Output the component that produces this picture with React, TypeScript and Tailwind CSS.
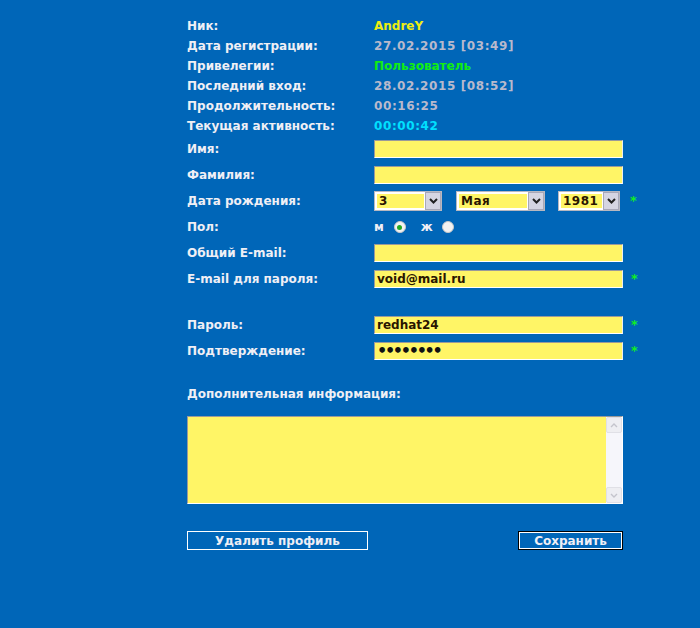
import React from "react";

const F = { fontFamily: '"DejaVu Sans", Verdana, sans-serif' };

function Info({ label, value, color }: { label: string; value: string; color: string }) {
  return (
    <div className="flex h-[20px] items-center">
      <div className="w-[187px] shrink-0 text-[#efeff5]">{label}</div>
      <div className={color}>{value}</div>
    </div>
  );
}

function Star() {
  return <span className="ml-[8px] text-[#11ee22] text-[13px]">*</span>;
}

function Field({ label, value, star, dots }: { label: string; value?: string; star?: boolean; dots?: boolean }) {
  return (
    <div className="flex h-[26px] items-center">
      <div className="w-[187px] shrink-0 text-[#efeff5]">{label}</div>
      <div className="flex shrink-0 items-center">
        <div
          className={`flex h-[18px] w-[249px] items-center border-t border-l border-[#9a9a9a] border-b border-b-white border-r border-r-[#eeeeee] bg-[#fff566] px-[2px] text-[#2a1500] ${dots ? "text-[16px] leading-none tracking-[-2.3px] text-[#111111]" : ""}`}
        >
          {value}
        </div>
        {star && <Star />}
      </div>
    </div>
  );
}

function Chevron() {
  return (
    <svg width="9" height="6" viewBox="0 0 9 6">
      <path d="M1 1 L4.5 4.5 L8 1" stroke="#222" strokeWidth="2" fill="none" />
    </svg>
  );
}

function Select({ value, w }: { value: string; w: string }) {
  return (
    <div className={`flex h-[20px] shrink-0 ${w} border border-[#b8b8c0] bg-white p-[2px] pr-0`}>
      <div className="flex flex-1 items-center bg-[#fff566] px-[2px] text-[#2a1500] tracking-[0.5px]">{value}</div>
      <div className="ml-[1px] flex w-[16px] items-center justify-center border border-[#a8a8b8] bg-[#d5d5e2] -mt-[2px] -mb-[2px]">
        <Chevron />
      </div>
    </div>
  );
}

function Radio({ checked }: { checked?: boolean }) {
  return (
    <span className="flex h-[12px] w-[12px] items-center justify-center rounded-full border border-[#c8c8c8] bg-[#f2f2f2]">
      {checked && <span className="h-[5px] w-[5px] rounded-full bg-[#22aa22]" />}
    </span>
  );
}

export default function App() {
  const num = "tracking-[0.6px]";
  return (
    <div className="h-[628px] w-[700px] overflow-hidden bg-[#0066b8] text-[12px] font-bold" style={F}>
      <div className="ml-[187px] w-[480px] pt-[16px]">
        <Info label="Ник:" value="AndreY" color="text-[#eeee11]" />
        <Info label="Дата регистрации:" value="27.02.2015 [03:49]" color={`text-[#b9b9cc] ${num}`} />
        <Info label="Привелегии:" value="Пользователь" color="text-[#11ee11]" />
        <Info label="Последний вход:" value="28.02.2015 [08:52]" color={`text-[#b9b9cc] ${num}`} />
        <Info label="Продолжительность:" value="00:16:25" color={`text-[#b9b9cc] ${num}`} />
        <Info label="Текущая активность:" value="00:00:42" color={`text-[#00e0ff] ${num}`} />

        <Field label="Имя:" />
        <Field label="Фамилия:" />
        <div className="flex h-[26px] items-center">
          <div className="w-[187px] shrink-0 text-[#efeff5]">Дата рождения:</div>
          <div className="flex shrink-0 items-center">
            <Select value="3" w="w-[68px]" />
            <div className="w-[14px] shrink-0" />
            <Select value="Мая" w="w-[89px]" />
            <div className="w-[13px] shrink-0" />
            <Select value="1981" w="w-[62px]" />
            <span className="ml-[10px] text-[#11ee22] text-[13px]">*</span>
          </div>
        </div>
        <div className="flex h-[26px] items-center">
          <div className="w-[187px] shrink-0 text-[#efeff5]">Пол:</div>
          <div className="flex items-center text-[#efeff5]">
            <span>м</span>
            <span className="ml-[10px]"><Radio checked /></span>
            <span className="ml-[15px]">ж</span>
            <span className="ml-[9px]"><Radio /></span>
          </div>
        </div>
        <Field label="Общий E-mail:" />
        <Field label="E-mail для пароля:" value="void@mail.ru" star />
        <div className="h-[20px]" />
        <Field label="Пароль:" value="redhat24" star />
        <Field label="Подтверждение:" value="••••••••" star dots />

        <div className="mt-[20px] flex h-[20px] items-center text-[#efeff5]">Дополнительная информация:</div>
        <div className="mt-[12px] flex h-[88px] w-[436px] border-t border-l border-[#9a9a9a] border-b border-b-white border-r border-r-white bg-[#fff566]">
          <div className="flex-1" />
          <div className="flex w-[16px] flex-col justify-between bg-[#f6f6fb]">
            <div className="flex h-[16px] items-center justify-center rounded-[2px] border border-[#e0e0e6] bg-[#eeeef2]">
              <svg width="8" height="5" viewBox="0 0 8 5"><path d="M1 4 L4 1 L7 4" stroke="#c4c4cc" strokeWidth="1.4" fill="none" /></svg>
            </div>
            <div className="flex h-[16px] items-center justify-center rounded-[2px] border border-[#e0e0e6] bg-[#eeeef2]">
              <svg width="8" height="5" viewBox="0 0 8 5"><path d="M1 1 L4 4 L7 1" stroke="#c4c4cc" strokeWidth="1.4" fill="none" /></svg>
            </div>
          </div>
        </div>

        <div className="mt-[27px] flex w-[436px] justify-between">
          <div className="flex h-[19px] w-[181px] items-center justify-center border border-white text-[#efeff5]">
            Удалить профиль
          </div>
          <div className="flex h-[19px] w-[105px] items-center justify-center border border-black outline outline-1 -outline-offset-2 outline-white text-[#efeff5]">
            Сохранить
          </div>
        </div>
      </div>
    </div>
  );
}
